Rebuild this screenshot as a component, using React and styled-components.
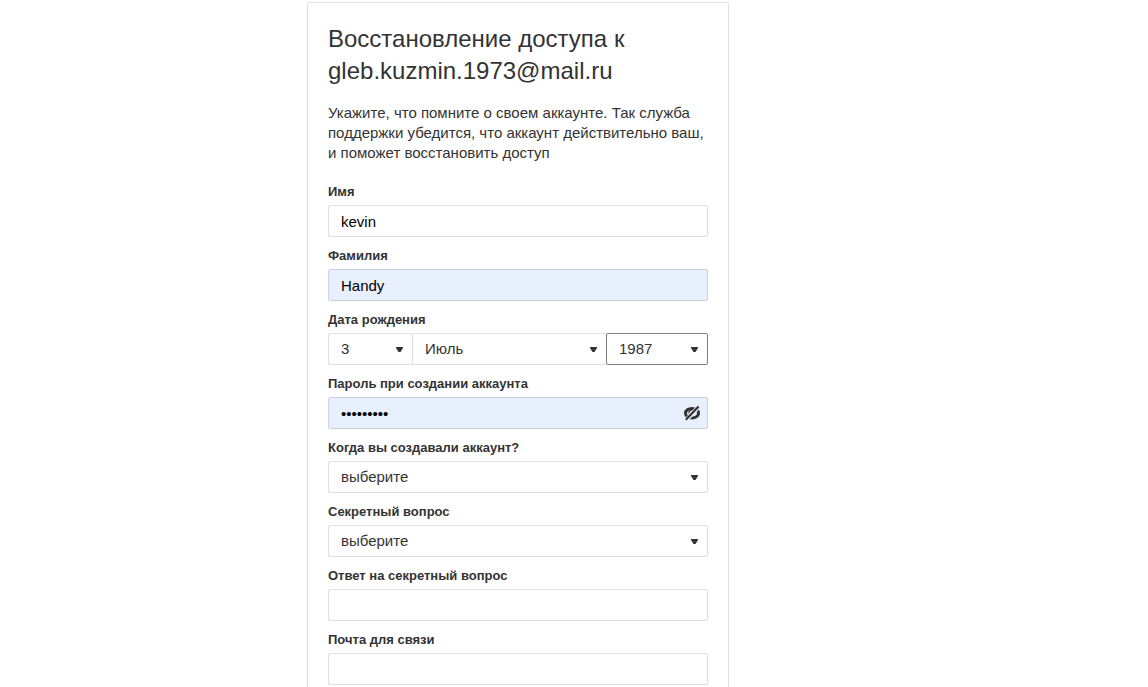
import { useState } from 'react';
import styled, { createGlobalStyle, css } from 'styled-components';

const GlobalStyle = createGlobalStyle`
  * {
    box-sizing: border-box;
  }

  body {
    margin: 0;
    background: #fff;
    color: #333;
    font-family: Arial, "Liberation Sans", sans-serif;
    font-size: 15px;
    line-height: 20px;
  }
`;

const Page = styled.main`
  display: flex;
  justify-content: center;
  padding: 2px 112px 20px 0;

  @media (max-width: 768px) {
    padding-right: 0;
  }
`;

const Card = styled.form`
  width: 100%;
  max-width: 422px;
  padding: 20px;
  border: 1px solid #e0e0e0;
  border-radius: 2px;
`;

const Title = styled.h1`
  margin: 0 0 16px;
  font-size: 24px;
  font-weight: 400;
  line-height: 32px;
`;

const Intro = styled.p`
  margin: 0 0 20px;
`;

const Field = styled.div`
  display: flex;
  flex-direction: column;
  gap: 4px;
  margin-bottom: 10px;
`;

const labelStyles = css`
  font-size: 13px;
  font-weight: 700;
  line-height: 18px;
`;

const Label = styled.label`
  ${labelStyles}
`;

const GroupLabel = styled.span`
  ${labelStyles}
`;

const controlStyles = css`
  display: block;
  width: 100%;
  height: 32px;
  margin: 0;
  border: 1px solid #e0e0e0;
  border-radius: 2px;
  outline: none;
  background: #fff;
  font-family: inherit;
  font-size: 15px;
`;

const Input = styled.input`
  ${controlStyles}
  padding: 0 12px;
  color: #000;

  ${({ $filled }) =>
    $filled &&
    css`
      border-color: #cad2e1;
      background: #e8f0fe;
    `}

  &:focus {
    border-color: #808080;
  }
`;

const Select = styled.select`
  ${controlStyles}
  padding: 0 28px 2px 12px;
  color: #333;
  appearance: none;
  cursor: pointer;

  ${({ $active }) =>
    $active &&
    css`
      border-color: #808080;
    `}
`;

const ControlWrap = styled.div`
  position: relative;
`;

const Caret = styled.svg`
  position: absolute;
  top: 14px;
  right: 10px;
  width: 7px;
  height: 5px;
  fill: #333;
  pointer-events: none;
`;

const DateRow = styled.div`
  display: grid;
  grid-template-columns: 84fr 194fr 102fr;

  /* neighbouring selects share one border */
  > :not(:last-child) {
    margin-right: -1px;
  }

  > :last-child {
    z-index: 1;
  }
`;

const EyeButton = styled.button`
  position: absolute;
  top: 0;
  right: 0;
  display: flex;
  align-items: center;
  justify-content: center;
  width: 32px;
  height: 32px;
  padding: 0;
  border: none;
  background: none;
  cursor: pointer;
`;

const EyeIcon = () => (
  <svg width="16" height="16" viewBox="0 0 16 16" fill="none">
    <ellipse cx="8" cy="8.2" rx="6.5" ry="4.8" stroke="#333" strokeWidth="3" />
    <path d="M4.800 8.200A3.200 3.200 0 0 1 8.600 5" stroke="#333" strokeWidth="1.200" />
    <path d="M1.500 15.600L15.500 1" stroke="#e8f0fe" strokeWidth="4.200" />
    <path d="M1.800 14.800L14.600 1.400" stroke="#333" strokeWidth="2.200" />
  </svg>
);

const Dropdown = ({ id, value, options, active, label }) => {
  const [current, setCurrent] = useState(value);

  return (
    <ControlWrap>
      <Select
        id={id}
        aria-label={label}
        value={current}
        $active={active}
        onChange={(e) => setCurrent(e.target.value)}
      >
        {options.map((option) => (
          <option key={option} value={option}>
            {option}
          </option>
        ))}
      </Select>
      <Caret viewBox="0 0 7 5">
        <path d="M0 0h7v1L4.500 5h-2L0 1z" />
      </Caret>
    </ControlWrap>
  );
};

const App = () => {
  const [showPassword, setShowPassword] = useState(false);

  return (
    <>
      <GlobalStyle />
      <Page>
        <Card onSubmit={(e) => e.preventDefault()}>
          <Title>Восстановление доступа к gleb.kuzmin.1973@mail.ru</Title>
          <Intro>
            Укажите, что помните о своем аккаунте. Так служба поддержки убедится, что аккаунт
            действительно ваш, и поможет восстановить доступ
          </Intro>

          <Field>
            <Label htmlFor="name">Имя</Label>
            <Input id="name" type="text" defaultValue="kevin" />
          </Field>

          <Field>
            <Label htmlFor="surname">Фамилия</Label>
            <Input id="surname" type="text" defaultValue="Handy" $filled />
          </Field>

          <Field role="group" aria-labelledby="birthday">
            <GroupLabel id="birthday">Дата рождения</GroupLabel>
            <DateRow>
              <Dropdown label="День" value="3" options={['3']} />
              <Dropdown label="Месяц" value="Июль" options={['Июль']} />
              <Dropdown label="Год" value="1987" options={['1987']} active />
            </DateRow>
          </Field>

          <Field>
            <Label htmlFor="password">Пароль при создании аккаунта</Label>
            <ControlWrap>
              <Input
                id="password"
                type={showPassword ? 'text' : 'password'}
                defaultValue="kevin1987"
                $filled
              />
              <EyeButton
                type="button"
                aria-label="Показать пароль"
                onClick={() => setShowPassword(!showPassword)}
              >
                <EyeIcon />
              </EyeButton>
            </ControlWrap>
          </Field>

          <Field>
            <Label htmlFor="created">Когда вы создавали аккаунт?</Label>
            <Dropdown id="created" value="выберите" options={['выберите']} />
          </Field>

          <Field>
            <Label htmlFor="question">Секретный вопрос</Label>
            <Dropdown id="question" value="выберите" options={['выберите']} />
          </Field>

          <Field>
            <Label htmlFor="answer">Ответ на секретный вопрос</Label>
            <Input id="answer" type="text" />
          </Field>

          <Field>
            <Label htmlFor="email">Почта для связи</Label>
            <Input id="email" type="email" />
          </Field>
        </Card>
      </Page>
    </>
  );
};

export default App;
